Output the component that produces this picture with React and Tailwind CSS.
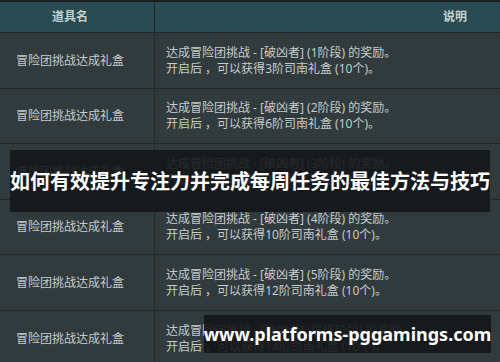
import React from "react";

const rows = [
  { s: "1阶段", g: "3阶", h: "h-[56px]" },
  { s: "2阶段", g: "6阶", h: "h-[55px]" },
  { s: "3阶段", g: "8阶", h: "h-[56px]" },
  { s: "4阶段", g: "10阶", h: "h-[55px]" },
  { s: "5阶段", g: "12阶", h: "h-[56px]" },
  { s: "最终阶段", g: "14阶", h: "h-[56px]" },
];

export default function App() {
  return (
    <div
      className="relative w-[500px] h-[362px] overflow-hidden bg-[#313a3c]"
      style={{ fontFamily: '"Noto Sans", "Noto Sans CJK SC", sans-serif' }}
    >
      <div className="border-t-2 border-[#1a1f20]">
        <div className="flex h-[30px] bg-[#2a4b51] text-[12px] font-bold text-[#c3d2d3]">
          <div className="w-[155px] flex items-center justify-center pr-[14px] border-r border-[#1f2a2c]">
            道具名
          </div>
          <div className="flex-1 flex items-center justify-end pr-[33px]">说明</div>
        </div>
        {rows.map((r, i) => (
          <div key={i} className={`flex ${r.h} border-t border-[#22292b] text-[12px] text-[#c5cdcd]`}>
            <div className="w-[155px] flex items-center justify-center pr-[14px] border-r border-[#22292b]">
              冒险团挑战达成礼盒
            </div>
            <div className="flex-1 flex flex-col justify-center pl-[11px] leading-[16px]">
              <div>达成冒险团挑战 - [破凶者] ({r.s}) 的奖励。</div>
              <div>开启后 ，可以获得{r.g}司南礼盒 (10个)。</div>
            </div>
          </div>
        ))}
      </div>

      <div className="absolute left-[10px] top-[150px] w-[480px] h-[62px] bg-[#141718]/90 flex items-center justify-center">
        <span
          className="text-[20px] leading-[26px] font-bold text-white whitespace-nowrap"
          style={{ fontFamily: '"Noto Sans CJK SC", sans-serif' }}
        >
          如何有效提升专注力并完成每周任务的最佳方法与技巧
        </span>
      </div>

      <div className="absolute left-[204px] top-[315px] w-[287px] h-[38px] bg-[#141718]/90 flex items-center justify-center">
        <span className="text-[18px] font-bold text-white whitespace-nowrap">www.platforms-pggamings.com</span>
      </div>
    </div>
  );
}
